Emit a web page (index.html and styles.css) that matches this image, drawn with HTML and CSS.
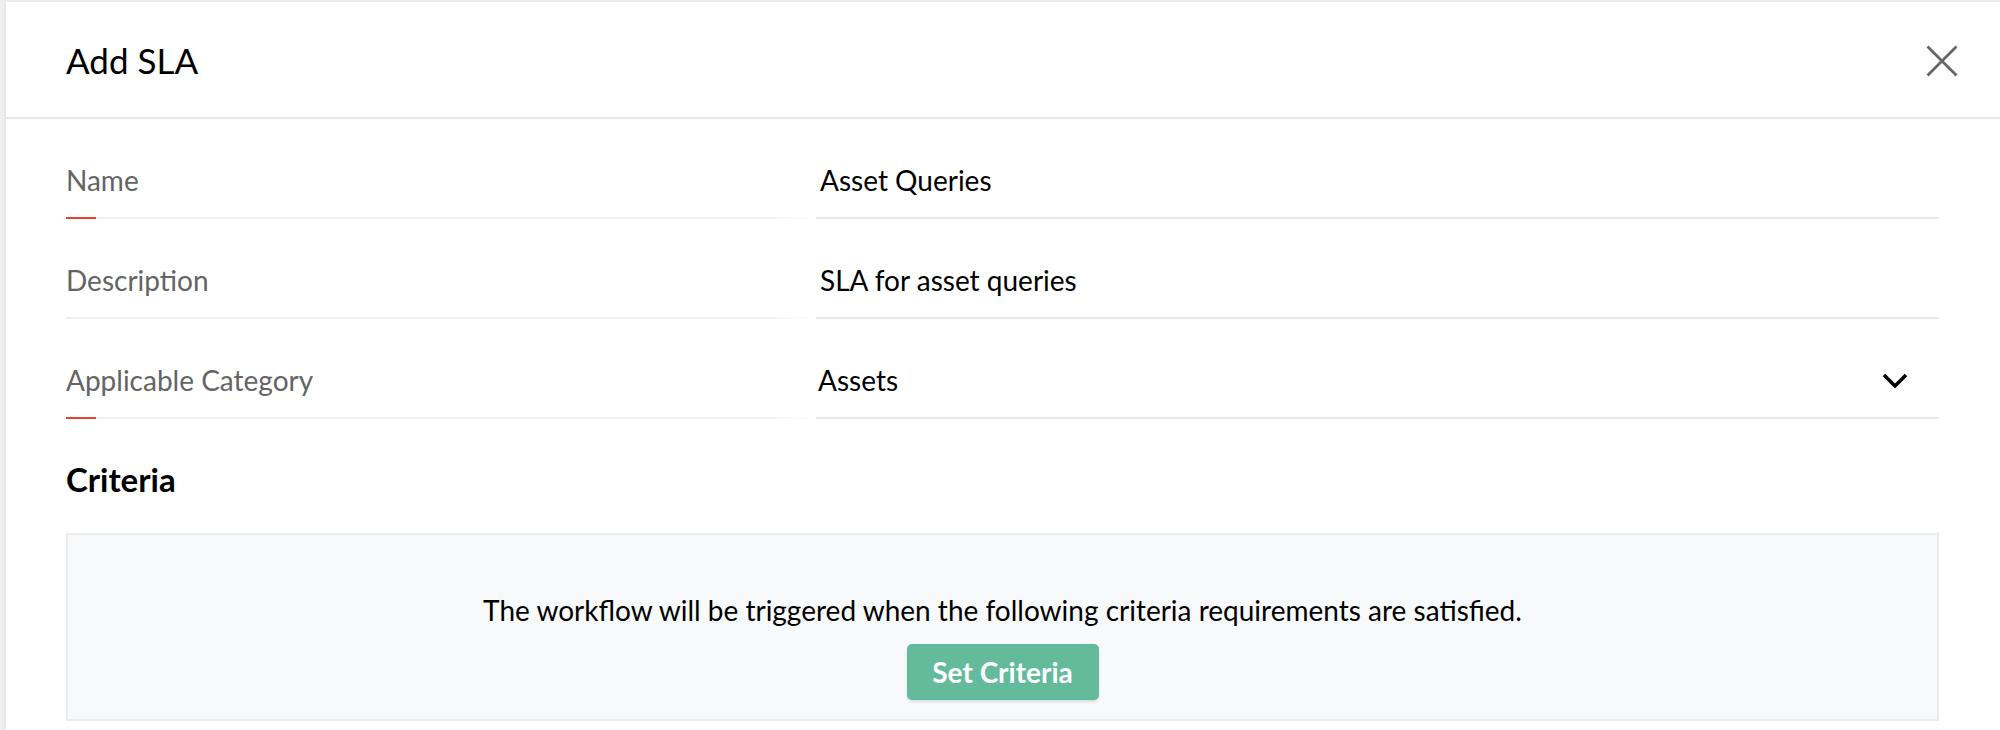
FILE: index.html
```html
<!DOCTYPE html>
<html lang="en">
<head>
<meta charset="utf-8">
<title>Add SLA</title>
<link rel="stylesheet" href="styles.css">
</head>
<body>
<div class="modal">
  <div class="modal-header">
    <h1 class="modal-title">Add SLA</h1>
    <button class="close-btn" aria-label="Close">
      <svg width="32" height="32" viewBox="0 0 32 32"><path d="M1.5 1.5 L30.5 30.5 M30.5 1.5 L1.5 30.5" stroke="#666666" stroke-width="2.8" fill="none"/></svg>
    </button>
  </div>
  <div class="modal-body">
    <div class="form-row">
      <div class="field-label required">Name</div>
      <div class="field-value">Asset Queries</div>
    </div>
    <div class="form-row">
      <div class="field-label">Description</div>
      <div class="field-value">SLA for asset queries</div>
    </div>
    <div class="form-row">
      <div class="field-label required">Applicable Category</div>
      <div class="field-value select">
        <span>Assets</span>
        <svg class="chevron" width="26" height="16" viewBox="0 0 26 16"><path d="M2 2 L13 13 L24 2" stroke="#000" stroke-width="3.6" fill="none"/></svg>
      </div>
    </div>
    <h2 class="section-title">Criteria</h2>
    <div class="criteria-box">
      <p class="criteria-text">The workflow will be triggered when the following criteria requirements are satisfied.</p>
      <button class="btn-primary">Set Criteria</button>
    </div>
  </div>
</div>
</body>
</html>
```
FILE: styles.css
```css
html, body {
  margin: 0;
  padding: 0;
}
body {
  width: 2000px;
  height: 730px;
  overflow: hidden;
  background: #eeeeee;
  font-family: Lato, "Open Sans", "Liberation Sans", sans-serif;
}
.modal {
  margin: 2px 0 0 6px;
  height: 728px;
  background: #ffffff;
  box-shadow: -1px 0 3px rgba(0,0,0,0.06);
}
.modal-header {
  height: 115px;
  border-bottom: 2px solid #e6e6e6;
  display: flex;
  align-items: center;
  justify-content: space-between;
  padding: 0 42px 0 60px;
}
.modal-title {
  margin: 0;
  font-size: 35px;
  font-weight: 400;
  color: #000;
  line-height: 42px;
  padding-top: 1px;
}
.close-btn {
  border: 0;
  background: none;
  padding: 0;
  width: 32px;
  height: 32px;
  display: flex;
  margin-top: 2px;
}
.modal-body {
  padding: 0 61px 0 60px;
}
.form-row {
  display: grid;
  grid-template-columns: 750px 1fr;
  height: 100px;
}
.field-label,
.field-value {
  font-size: 28px;
  line-height: 34px;
  padding-top: 44px;
  box-sizing: border-box;
  height: 100px;
}
.field-label {
  color: #646464;
  position: relative;
  background-image: linear-gradient(to right, #efefef 0, #efefef 92%, rgba(239,239,239,0) 100%);
  background-size: 100% 2px;
  background-position: left bottom;
  background-repeat: no-repeat;
}
.field-label.required::after {
  content: "";
  position: absolute;
  left: 0;
  bottom: 0;
  width: 30px;
  height: 2px;
  background: #e8412f;
}
.field-value {
  color: #000;
  border-bottom: 2px solid #e6e6e6;
  padding-left: 4px;
}
.field-value.select {
  display: flex;
  justify-content: space-between;
  align-items: flex-start;
  padding-left: 2px;
  padding-right: 31px;
}
.chevron {
  margin-top: 10px;
}
.section-title {
  margin: 41px 0 0;
  font-size: 33px;
  line-height: 38px;
  font-weight: 700;
  color: #000;
}
.criteria-box {
  margin-top: 35px;
  height: 188px;
  box-sizing: border-box;
  border: 2px solid #ececec;
  background: #f8f9fb;
  display: flex;
  flex-direction: column;
  align-items: center;
  padding-top: 59px;
}
.criteria-text {
  margin: 0;
  font-size: 28px;
  line-height: 32px;
  color: #000;
}
.btn-primary {
  margin-top: 18px;
  height: 56px;
  width: 192px;
  border: 0;
  border-radius: 5px;
  background: #63bb9c;
  color: #ffffff;
  font-family: Lato, "Open Sans", "Liberation Sans", sans-serif;
  font-size: 28px;
  font-weight: 700;
  box-shadow: 0 2px 3px rgba(0,0,0,0.12);
  padding: 0;
}
```
